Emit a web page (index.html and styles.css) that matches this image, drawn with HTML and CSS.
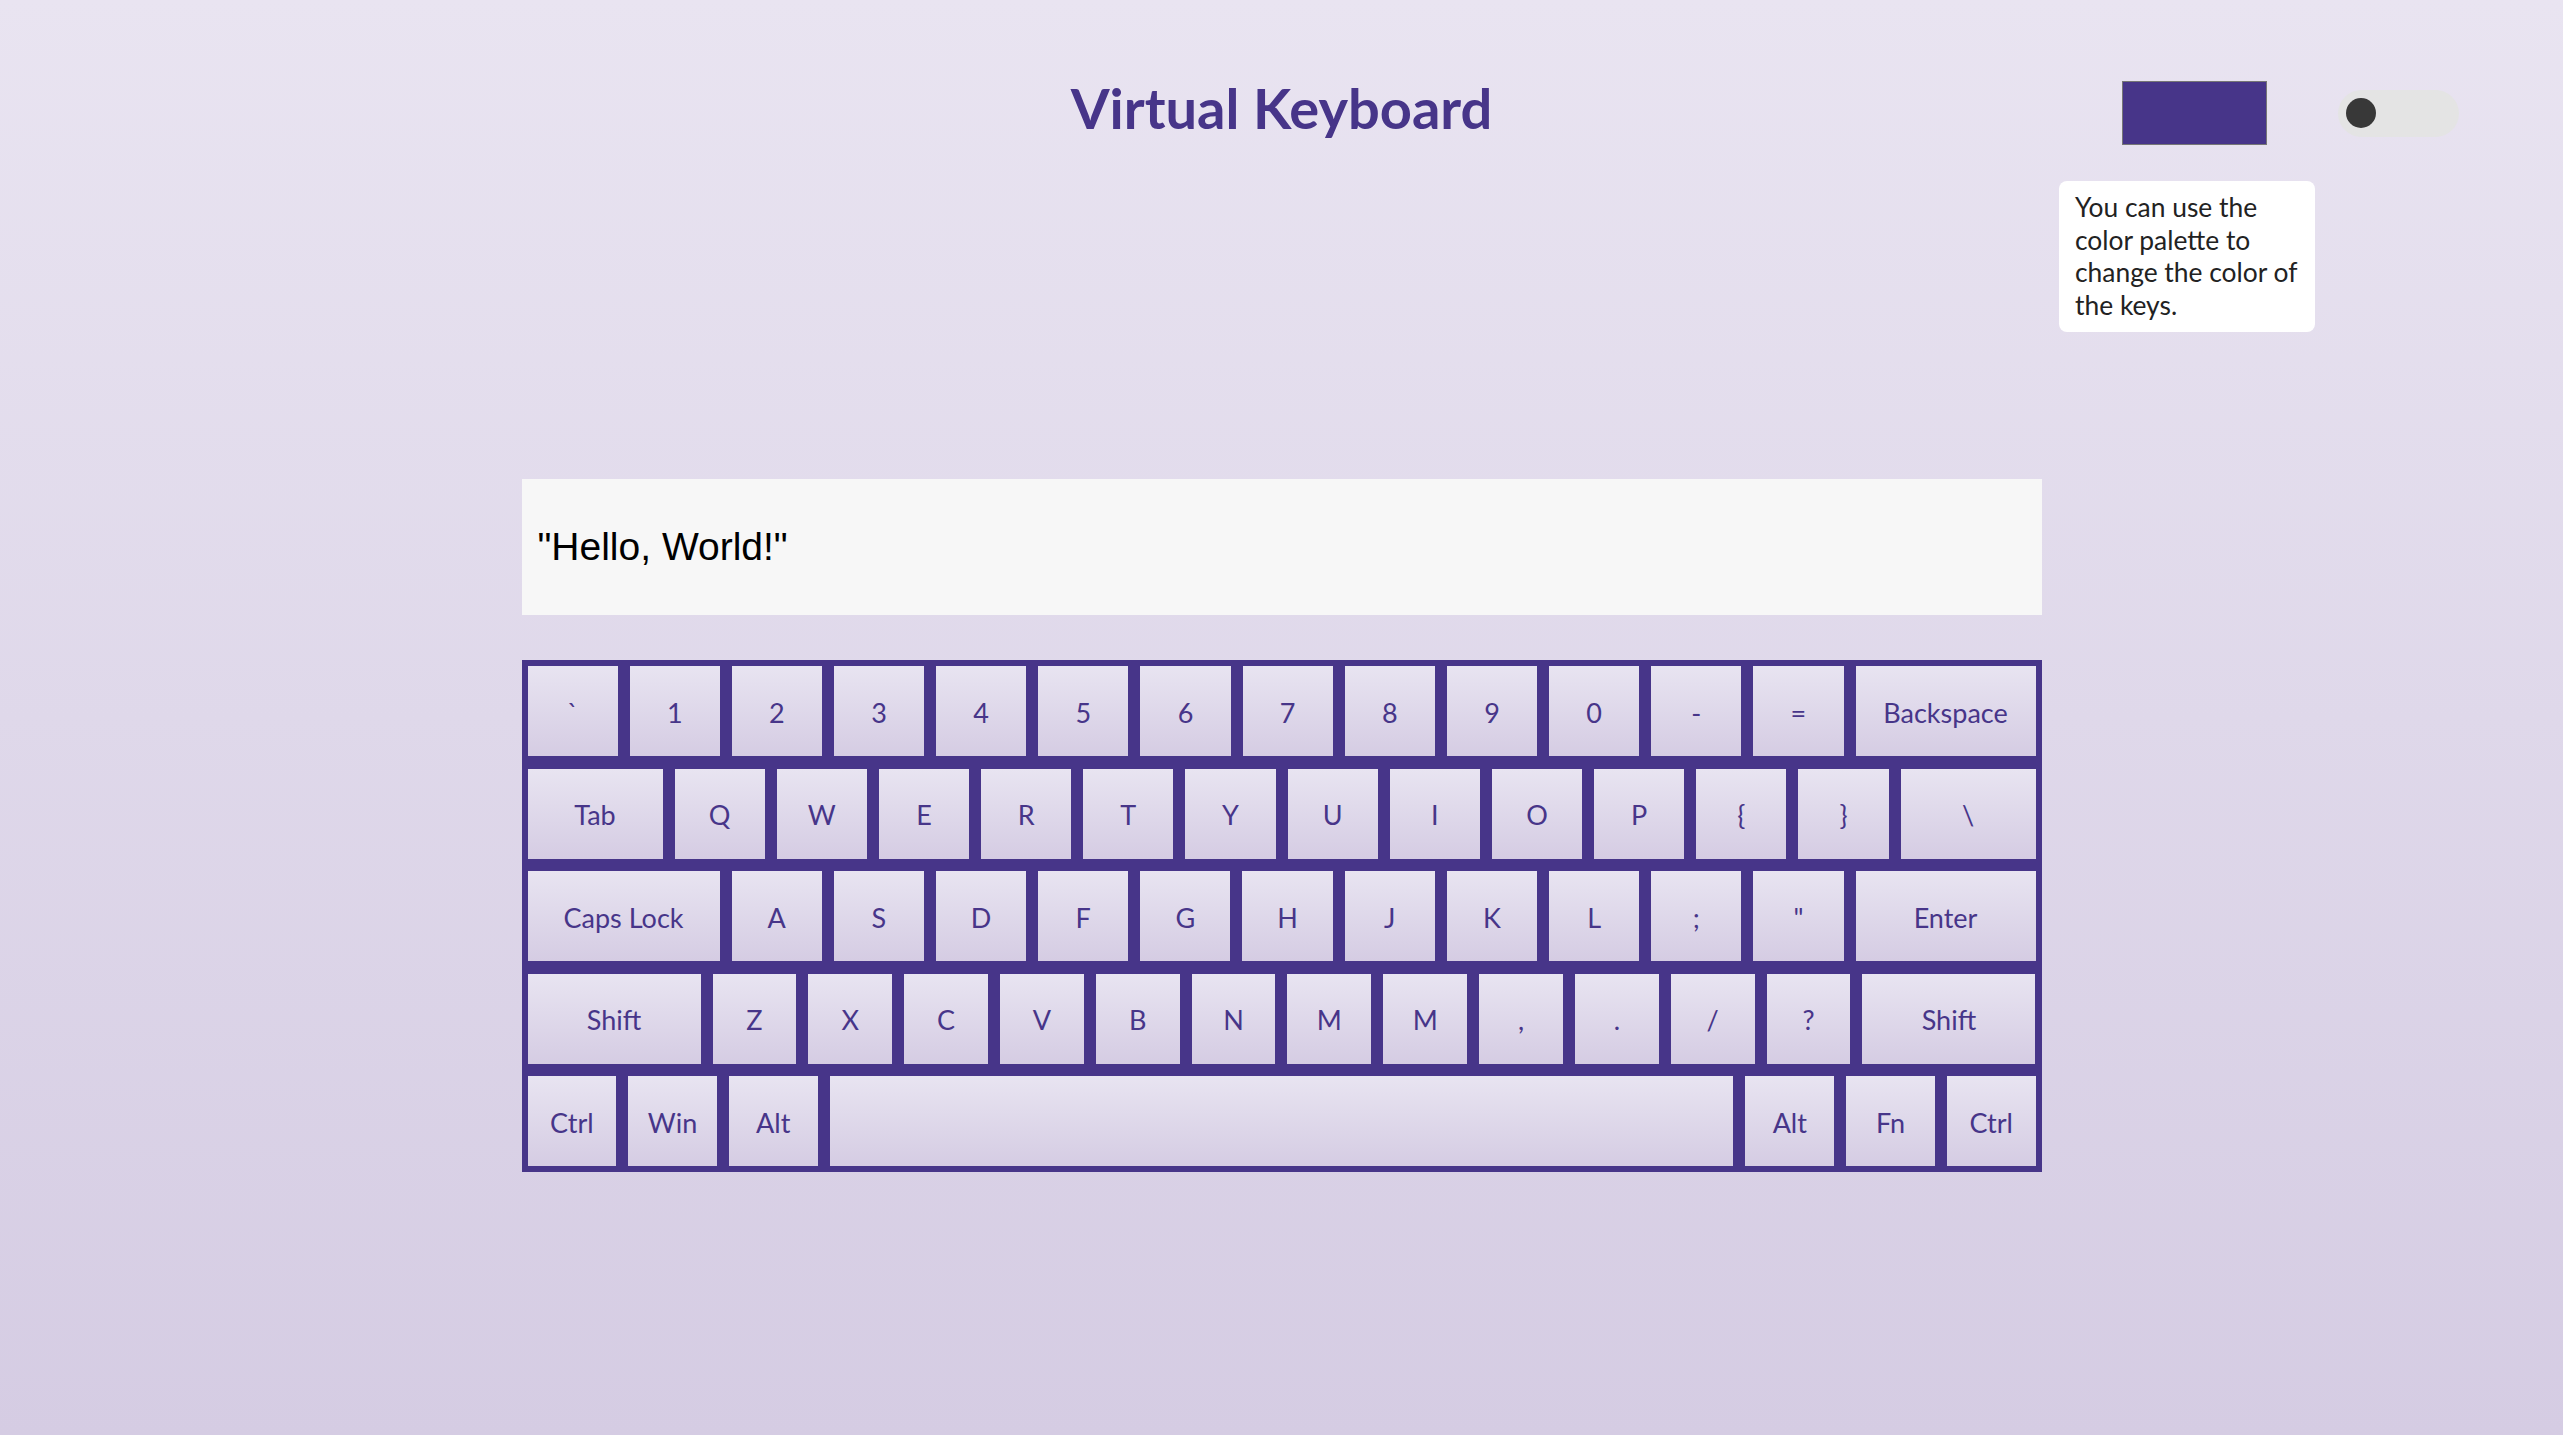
FILE: index.html
```html
<!DOCTYPE html>
<html lang="en">
<head>
<meta charset="utf-8">
<title>Virtual Keyboard</title>
<link rel="stylesheet" href="styles.css">
</head>
<body>
<header class="header">
  <h1 class="title">Virtual Keyboard</h1>
  <div class="controls">
    <div class="palette">
      <div class="swatch"></div>
      <div class="tooltip">You can use the<br>color palette to<br>change the color of<br>the keys.</div>
    </div>
    <div class="toggle"><span class="knob"></span></div>
  </div>
</header>
<main class="main">
  <div class="editor">"Hello, World!"</div>
  <div class="keyboard">
    <div class="row">
      <div class="key">`</div><div class="key">1</div><div class="key">2</div><div class="key">3</div><div class="key">4</div><div class="key">5</div><div class="key">6</div><div class="key">7</div><div class="key">8</div><div class="key">9</div><div class="key">0</div><div class="key">-</div><div class="key">=</div><div class="key key-backspace">Backspace</div>
    </div>
    <div class="row">
      <div class="key key-tab">Tab</div><div class="key">Q</div><div class="key">W</div><div class="key">E</div><div class="key">R</div><div class="key">T</div><div class="key">Y</div><div class="key">U</div><div class="key">I</div><div class="key">O</div><div class="key">P</div><div class="key">{</div><div class="key">}</div><div class="key key-tab">\</div>
    </div>
    <div class="row">
      <div class="key key-caps">Caps Lock</div><div class="key">A</div><div class="key">S</div><div class="key">D</div><div class="key">F</div><div class="key">G</div><div class="key">H</div><div class="key">J</div><div class="key">K</div><div class="key">L</div><div class="key">;</div><div class="key">"</div><div class="key key-enter">Enter</div>
    </div>
    <div class="row">
      <div class="key key-shift">Shift</div><div class="key">Z</div><div class="key">X</div><div class="key">C</div><div class="key">V</div><div class="key">B</div><div class="key">N</div><div class="key">M</div><div class="key">M</div><div class="key">,</div><div class="key">.</div><div class="key">/</div><div class="key">?</div><div class="key key-shift">Shift</div>
    </div>
    <div class="row">
      <div class="key key-mod">Ctrl</div><div class="key key-mod">Win</div><div class="key key-mod">Alt</div><div class="key key-space"></div><div class="key key-mod">Alt</div><div class="key key-mod">Fn</div><div class="key key-mod">Ctrl</div>
    </div>
  </div>
</main>
</body>
</html>
```

FILE: styles.css
```css
html {
  min-height: 100%;
  background: linear-gradient(180deg, #e9e4f1 0%, #d5cce3 100%);
}

body {
  margin: 0;
  font-family: Lato, "Open Sans", sans-serif;
}

.header {
  position: relative;
  display: flex;
  justify-content: center;
  padding-top: 74px;
}

.title {
  margin: 0;
  font-size: 56px;
  line-height: 1.2;
  font-weight: 700;
  color: #473589;
}

.controls {
  position: absolute;
  top: 81px;
  right: 104px;
  display: flex;
  align-items: center;
  gap: 71px;
}

.palette {
  position: relative;
}

.swatch {
  width: 143px;
  height: 62px;
  background: #473589;
  border: 1px solid #767676;
}

.tooltip {
  position: absolute;
  top: 100px;
  left: -63px;
  width: 224px;
  padding: 10px 16px 11px;
  background: #ffffff;
  border-radius: 8px;
  color: #222222;
  font-size: 26.4px;
  line-height: 32.5px;
  white-space: nowrap;
}

.toggle {
  width: 121px;
  height: 47px;
  border-radius: 24px;
  background: #e4e4e4;
  display: flex;
  align-items: center;
  padding-left: 8px;
  box-sizing: border-box;
}

.knob {
  width: 30px;
  height: 30px;
  border-radius: 50%;
  background: #383838;
}

.main {
  width: 1520px;
  margin: 338px auto 0;
}

.editor {
  height: 136px;
  display: flex;
  align-items: center;
  padding-left: 16px;
  background: #f7f7f7;
  font-family: "Liberation Sans", Arial, sans-serif;
  font-size: 39px;
  color: #000000;
}

.keyboard {
  margin-top: 45px;
  border: 6px solid #473589;
  background: #473589;
  display: flex;
  flex-direction: column;
  gap: 12.5px;
}

.row {
  display: flex;
  gap: 12px;
}

.key {
  flex: 1 1 0;
  height: 90px;
  padding-top: 2px;
  box-sizing: border-box;
  display: flex;
  align-items: center;
  justify-content: center;
  background: linear-gradient(180deg, #e8e4f1 0%, #d5cce3 100%);
  color: #473589;
  font-size: 27px;
}

.key-backspace,
.key-enter {
  flex: 0 0 180px;
}

.key-tab {
  flex: 0 0 135px;
}

.key-caps {
  flex: 0 0 192px;
}

.key-shift {
  flex: 0 0 173px;
}

.key-mod {
  flex: 0 0 88.7px;
}

.key-space {
  flex: 1 1 0;
}
```
